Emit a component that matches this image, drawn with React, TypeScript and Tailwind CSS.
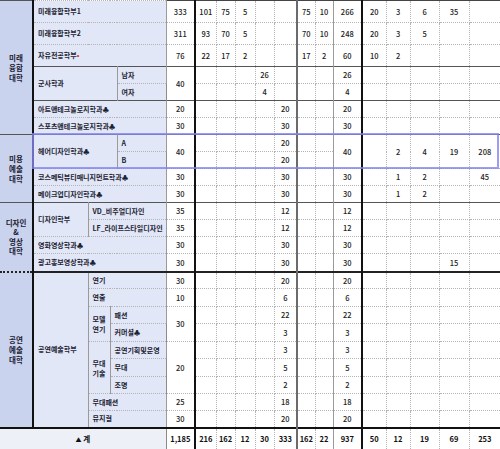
import type { ReactNode } from 'react';

type Cell = string | { v: string; rs: number } | null;

type Row = {
  h: string;
  top?: 'solid' | 'thick';
  names: ReactNode;
  data: Cell[];
};

const base = 'border border-dotted border-[#b4b4b4] p-0';

// left border of each data column (A..N)
const colLeft = [
  'border-l border-l-[#8a8a8a] [border-left-style:solid]',
  'border-l-2 border-l-[#111] [border-left-style:solid]',
  '',
  '',
  '',
  '',
  'border-l-2 border-l-[#6b6b6b] [border-left-style:solid]',
  '',
  'border-l border-l-[#9a9a9a] [border-left-style:solid]',
  'border-l-2 border-l-[#111] [border-left-style:solid]',
  '',
  '',
  '',
  'border-r-0',
];

const topCls = {
  solid: 'border-t border-t-[#555] [border-top-style:solid]',
  thick: 'border-t-2 border-t-[#222] [border-top-style:solid]',
};

const college =
  'bg-[#c9d3ee] text-center align-middle font-bold text-[7.5px] leading-[10px] text-[#1d2233] border-l-0 border-r-2 border-r-[#111] [border-right-style:solid] border-y border-y-[#555] [border-top-style:solid] [border-bottom-style:solid] ' +
  base;

const nameBase =
  'bg-[#e1e7f6] text-left align-middle pl-[4px] text-[7px] font-semibold leading-[9px] text-[#1d2233] whitespace-nowrap [border-left-style:solid] [border-right-style:solid] border-x-[#9a9a9a]';

const Club = () => <span className="text-[6.5px]">♣</span>;

function N({
  children,
  cs = 1,
  rs = 1,
  top,
  className = '',
}: {
  children: ReactNode;
  cs?: number;
  rs?: number;
  top?: 'solid' | 'thick';
  className?: string;
}) {
  return (
    <td
      colSpan={cs}
      rowSpan={rs}
      className={`${base} ${nameBase} ${top ? topCls[top] : ''} ${className}`}
    >
      {children}
    </td>
  );
}

const e = '';

const rows: Row[] = [
  {
    h: 'h-[22px]',
    names: (
      <>
        <td rowSpan={7} className={college}>
          미래
          <br />
          융합
          <br />
          대학
        </td>
        <N cs={4}>미래융합학부1</N>
      </>
    ),
    data: ['333', '101', '75', '5', e, e, '75', '10', '266', '20', '3', '6', '35', e],
  },
  {
    h: 'h-[22px]',
    names: <N cs={4}>미래융합학부2</N>,
    data: ['311', '93', '70', '5', e, e, '70', '10', '248', '20', '3', '5', e, e],
  },
  {
    h: 'h-[22px]',
    names: (
      <N cs={4}>
        자유전공학부<span className="text-[#e53030]">•</span>
      </N>
    ),
    data: ['76', '22', '17', '2', e, e, '17', '2', '60', '10', '2', e, e, e],
  },
  {
    h: 'h-[17px]',
    top: 'solid',
    names: (
      <>
        <N cs={3} rs={2} top="solid">
          군사학과
        </N>
        <N top="solid">남자</N>
      </>
    ),
    data: [{ v: '40', rs: 2 }, e, e, e, '26', e, e, e, '26', e, e, e, e, e],
  },
  {
    h: 'h-[17px]',
    names: <N>여자</N>,
    data: [null, e, e, e, '4', e, e, e, '4', e, e, e, e, e],
  },
  {
    h: 'h-[17px]',
    top: 'solid',
    names: (
      <N cs={4} top="solid">
        아트앤테크놀로지학과
        <Club />
      </N>
    ),
    data: ['20', e, e, e, e, '20', e, e, '20', e, e, e, e, e],
  },
  {
    h: 'h-[17px]',
    names: (
      <N cs={4}>
        스포츠앤테크놀로지학과
        <Club />
      </N>
    ),
    data: ['30', e, e, e, e, '30', e, e, '30', e, e, e, e, e],
  },
  {
    h: 'h-[17px]',
    top: 'solid',
    names: (
      <>
        <td rowSpan={4} className={college}>
          미용
          <br />
          예술
          <br />
          대학
        </td>
        <N cs={3} rs={2} top="solid">
          헤어디자인학과
          <Club />
        </N>
        <N top="solid">A</N>
      </>
    ),
    data: [
      { v: '40', rs: 2 },
      e,
      e,
      e,
      e,
      '20',
      e,
      e,
      { v: '40', rs: 2 },
      { v: e, rs: 2 },
      { v: '2', rs: 2 },
      { v: '4', rs: 2 },
      { v: '19', rs: 2 },
      { v: '208', rs: 2 },
    ],
  },
  {
    h: 'h-[17px]',
    names: <N>B</N>,
    data: [null, e, e, e, e, '20', e, e, null, null, null, null, null, null],
  },
  {
    h: 'h-[17px]',
    names: (
      <N cs={4}>
        코스메틱뷰티매니지먼트학과
        <Club />
      </N>
    ),
    data: ['30', e, e, e, e, '30', e, e, '30', e, '1', '2', e, '45'],
  },
  {
    h: 'h-[17px]',
    names: (
      <N cs={4}>
        메이크업디자인학과
        <Club />
      </N>
    ),
    data: ['30', e, e, e, e, '30', e, e, '30', e, '1', '2', e, e],
  },
  {
    h: 'h-[17px]',
    top: 'solid',
    names: (
      <>
        <td rowSpan={4} className={`${college} !leading-[9.5px]`}>
          디자인
          <br />
          &amp;
          <br />
          영상
          <br />
          대학
        </td>
        <N rs={2} top="solid">
          디자인학부
        </N>
        <N cs={3} top="solid">
          VD_비주얼디자인
        </N>
      </>
    ),
    data: ['35', e, e, e, e, '12', e, e, '12', e, e, e, e, e],
  },
  {
    h: 'h-[17px]',
    names: <N cs={3}>LF_라이프스타일디자인</N>,
    data: ['35', e, e, e, e, '12', e, e, '12', e, e, e, e, e],
  },
  {
    h: 'h-[17px]',
    names: (
      <N cs={4}>
        영화영상학과
        <Club />
      </N>
    ),
    data: ['30', e, e, e, e, '30', e, e, '30', e, e, e, e, e],
  },
  {
    h: 'h-[18px]',
    names: (
      <N cs={4}>
        광고홍보영상학과
        <Club />
      </N>
    ),
    data: ['30', e, e, e, e, '30', e, e, '30', e, e, e, '15', e],
  },
  {
    h: 'h-[17px]',
    top: 'thick',
    names: (
      <>
        <td rowSpan={9} className={`${college} !border-t-2 !border-t-[#222]`}>
          공연
          <br />
          예술
          <br />
          대학
        </td>
        <N rs={9} top="thick">
          공연예술학부
        </N>
        <N cs={3} top="thick">
          연기
        </N>
      </>
    ),
    data: ['30', e, e, e, e, '20', e, e, '20', e, e, e, e, e],
  },
  {
    h: 'h-[18px]',
    names: <N cs={3}>연출</N>,
    data: ['10', e, e, e, e, '6', e, e, '6', e, e, e, e, e],
  },
  {
    h: 'h-[17px]',
    names: (
      <>
        <N rs={2} className="!text-center !pl-0 !leading-[10px]">
          모델
          <br />
          연기
        </N>
        <N cs={2}>패션</N>
      </>
    ),
    data: [{ v: '30', rs: 2 }, e, e, e, e, '22', e, e, '22', e, e, e, e, e],
  },
  {
    h: 'h-[18px]',
    names: (
      <N cs={2}>
        커머셜
        <Club />
      </N>
    ),
    data: [null, e, e, e, e, '3', e, e, '3', e, e, e, e, e],
  },
  {
    h: 'h-[17px]',
    names: (
      <>
        <N rs={3} className="!text-center !pl-0 !leading-[10px]">
          무대
          <br />
          기술
        </N>
        <N cs={2}>공연기획및운영</N>
      </>
    ),
    data: [{ v: '20', rs: 3 }, e, e, e, e, '3', e, e, '3', e, e, e, e, e],
  },
  {
    h: 'h-[18px]',
    names: <N cs={2}>무대</N>,
    data: [null, e, e, e, e, '5', e, e, '5', e, e, e, e, e],
  },
  {
    h: 'h-[17px]',
    names: <N cs={2}>조명</N>,
    data: [null, e, e, e, e, '2', e, e, '2', e, e, e, e, e],
  },
  {
    h: 'h-[17px]',
    names: <N cs={3}>무대패션</N>,
    data: ['25', e, e, e, e, '18', e, e, '18', e, e, e, e, e],
  },
  {
    h: 'h-[17px]',
    names: <N cs={3}>뮤지컬</N>,
    data: ['30', e, e, e, e, '20', e, e, '20', e, e, e, e, e],
  },
];

const totals = ['1,185', '216', '162', '12', '30', '333', '162', '22', '937', '50', '12', '19', '69', '253'];

const colWidths = [33, 55, 22, 7, 49, 29, 21, 19, 20, 19, 23, 18, 18, 29, 24, 24, 29, 30, 31];

export default function App() {
  return (
    <div className="relative w-[500px] h-[449px] overflow-hidden bg-white font-['Noto_Sans_CJK_KR',sans-serif]">
      <table className="w-[500px] table-fixed border-collapse">
        <colgroup>
          {colWidths.map((w, i) => (
            <col key={i} style={{ width: w }} />
          ))}
        </colgroup>
        <tbody>
          {rows.map((r, ri) => (
            <tr key={ri} className={r.h}>
              {r.names}
              {r.data.map((c, ci) => {
                if (c === null) return null;
                const v = typeof c === 'string' ? c : c.v;
                const rs = typeof c === 'string' ? 1 : c.rs;
                return (
                  <td
                    key={ci}
                    rowSpan={rs}
                    className={`${base} ${colLeft[ci]} ${r.top ? topCls[r.top] : ''} ${
                      ri === 0 ? 'border-t border-t-[#444] [border-top-style:solid]' : ''
                    } text-center align-middle text-[7.5px] font-medium leading-none text-[#222]`}
                  >
                    {v}
                  </td>
                );
              })}
            </tr>
          ))}
          <tr className="h-[22px]">
            <td
              colSpan={5}
              className={`${base} border-l-0 border-t-2 border-t-[#111] [border-top-style:solid] border-b border-b-[#444] [border-bottom-style:solid] [border-right-style:solid] border-r-[#8a8a8a] bg-[#eef0f7] text-center align-middle text-[7.5px] font-bold text-[#111]`}
            >
              <span className="text-[6px]">▲</span> 계
            </td>
            {totals.map((t, ci) => (
              <td
                key={ci}
                className={`${base} ${colLeft[ci]} border-t-2 border-t-[#111] [border-top-style:solid] border-b border-b-[#444] [border-bottom-style:solid] text-center align-middle text-[7.5px] font-bold leading-none text-[#111]`}
              >
                {t}
              </td>
            ))}
          </tr>
        </tbody>
      </table>
      {/* selection highlight over 헤어디자인학과 */}
      <div className="pointer-events-none absolute left-[32px] top-[133px] h-[36px] w-[467px] border-2 border-[#8585f0]/80" />
    </div>
  );
}
